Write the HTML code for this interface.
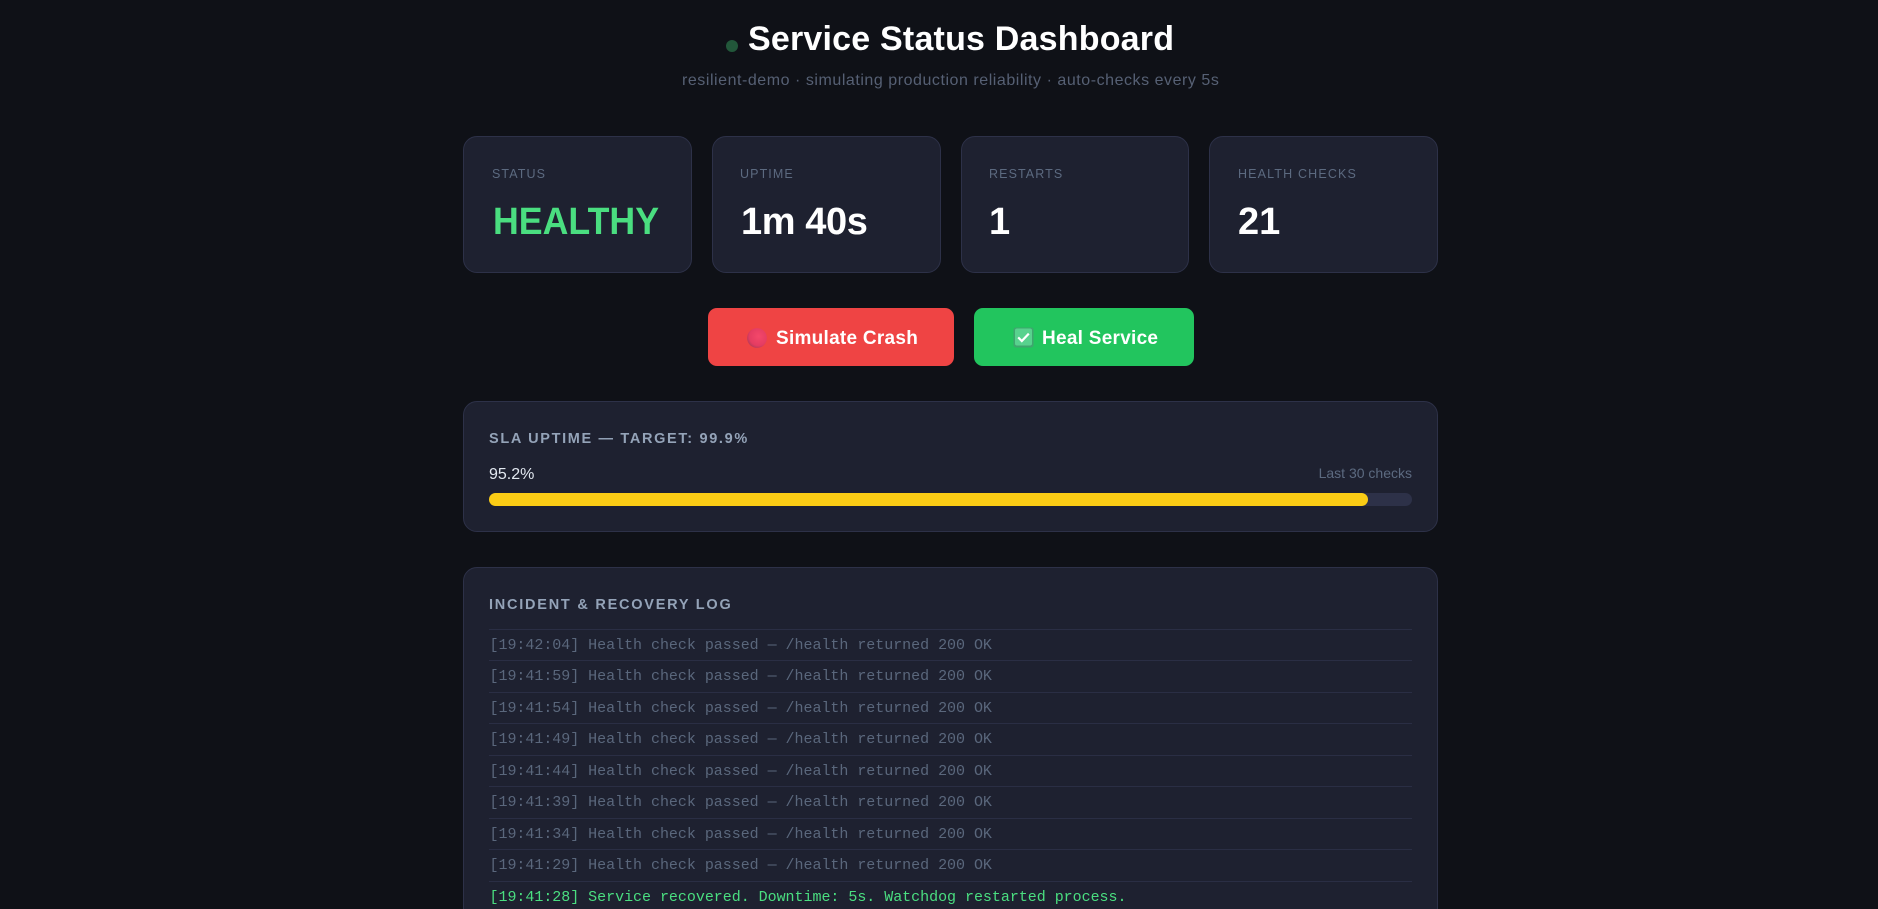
<!DOCTYPE html>
<html lang="en">
<head>
<meta charset="utf-8">
<title>Service Status Dashboard</title>
<style>
html,body{margin:0;padding:0;width:1878px;height:909px;overflow:hidden;background:#0f1117;}
body{position:relative;font-family:"Liberation Sans",sans-serif;}
.a{position:absolute;white-space:nowrap;}
.card{position:absolute;box-sizing:border-box;background:#1e2130;border:1px solid #2d3148;border-radius:14px;}
.lbl{position:absolute;top:167px;line-height:14px;font-size:12.5px;letter-spacing:1.1px;color:#5c6a80;white-space:nowrap;}
.val{position:absolute;top:200px;line-height:44px;font-size:38px;font-weight:700;color:#fff;white-space:nowrap;}
.btn{position:absolute;top:308px;height:58px;border-radius:9px;}
.bt{position:absolute;top:327px;line-height:24px;font-size:19px;font-weight:700;letter-spacing:.27px;color:#fff;white-space:nowrap;}
.h{position:absolute;font-size:14.5px;line-height:18px;font-weight:700;letter-spacing:1.66px;color:#94a3b8;white-space:nowrap;}
#log{position:absolute;left:489px;top:628.9px;width:923px;font-family:"Liberation Mono",monospace;font-size:15px;letter-spacing:-.03px;color:#5a677c;}
#log div{box-sizing:border-box;height:31.5px;line-height:31px;border-top:1px solid #2a2e44;white-space:pre;padding-left:.5px;}
#log .g{color:#4ade80;}
</style>
</head>
<body>
<div class="a" style="left:726px;top:40px;width:12px;height:12px;border-radius:50%;background:#22573a;"></div>
<div class="a" style="left:748px;top:17px;line-height:44px;font-size:34px;font-weight:700;letter-spacing:.2px;color:#fff;">Service Status Dashboard</div>
<div class="a" style="left:682px;top:71px;line-height:20px;font-size:16px;letter-spacing:.54px;color:#566074;">resilient-demo · simulating production reliability · auto-checks every 5s</div>

<div class="card" style="left:463px;top:136px;width:229px;height:137px;"></div>
<div class="card" style="left:712px;top:136px;width:229px;height:137px;"></div>
<div class="card" style="left:961px;top:136px;width:228px;height:137px;"></div>
<div class="card" style="left:1209px;top:136px;width:229px;height:137px;"></div>

<div class="lbl" style="left:492px;">STATUS</div>
<div class="lbl" style="left:740px;">UPTIME</div>
<div class="lbl" style="left:989px;">RESTARTS</div>
<div class="lbl" style="left:1238px;letter-spacing:1.16px;">HEALTH CHECKS</div>

<div class="val" style="left:493px;color:#4ade80;transform:scaleX(.94);transform-origin:left center;">HEALTHY</div>
<div class="val" style="left:741px;letter-spacing:-.4px;">1m 40s</div>
<div class="val" style="left:989px;">1</div>
<div class="val" style="left:1238px;">21</div>

<div class="btn" style="left:708px;width:246px;background:#ef4444;"></div>
<div class="btn" style="left:974px;width:220px;background:#22c55e;"></div>
<svg class="a" style="left:746px;top:327px;" width="22" height="22" viewBox="0 0 22 22">
  <defs><radialGradient id="r" cx="58%" cy="42%" r="62%"><stop offset="0" stop-color="#f4486a"/><stop offset=".75" stop-color="#e43c62"/><stop offset="1" stop-color="#b63a58"/></radialGradient></defs>
  <circle cx="11" cy="11" r="9.9" fill="url(#r)"/>
</svg>
<div class="bt" style="left:776px;">Simulate Crash</div>
<svg class="a" style="left:1012.5px;top:327px;" width="21" height="21" viewBox="0 0 21 21">
  <rect x=".5" y=".5" width="20" height="20" rx="2.5" fill="#3fa56e"/>
  <rect x="2" y="1.5" width="17" height="17" rx="2" fill="#58d28e"/>
  <path d="M5.2 10.4 L8.8 14 L15.8 6.6" fill="none" stroke="#fff" stroke-width="2.2"/>
</svg>
<div class="bt" style="left:1042px;">Heal Service</div>

<div class="card" style="left:463px;top:401px;width:975px;height:131px;"></div>
<div class="h" style="left:489px;top:430px;">SLA UPTIME — TARGET: 99.9%</div>
<div class="a" style="left:489px;top:465px;line-height:20px;font-size:16px;color:#e2e8f0;">95.2%</div>
<div class="a" style="right:466px;top:464px;line-height:18px;font-size:14px;color:#5c6a80;">Last 30 checks</div>
<div class="a" style="left:489px;top:493px;width:923px;height:13px;border-radius:7px;background:#2d3148;"></div>
<div class="a" style="left:489px;top:493px;width:879px;height:13px;border-radius:7px;background:#facc15;"></div>

<div class="card" style="left:463px;top:567px;width:975px;height:400px;"></div>
<div class="h" style="left:489px;top:596px;letter-spacing:1.76px;">INCIDENT &amp; RECOVERY LOG</div>
<div id="log">
<div>[19:42:04] Health check passed — /health returned 200 OK</div>
<div>[19:41:59] Health check passed — /health returned 200 OK</div>
<div>[19:41:54] Health check passed — /health returned 200 OK</div>
<div>[19:41:49] Health check passed — /health returned 200 OK</div>
<div>[19:41:44] Health check passed — /health returned 200 OK</div>
<div>[19:41:39] Health check passed — /health returned 200 OK</div>
<div>[19:41:34] Health check passed — /health returned 200 OK</div>
<div>[19:41:29] Health check passed — /health returned 200 OK</div>
<div class="g">[19:41:28] Service recovered. Downtime: 5s. Watchdog restarted process.</div>
</div>
</body>
</html>
